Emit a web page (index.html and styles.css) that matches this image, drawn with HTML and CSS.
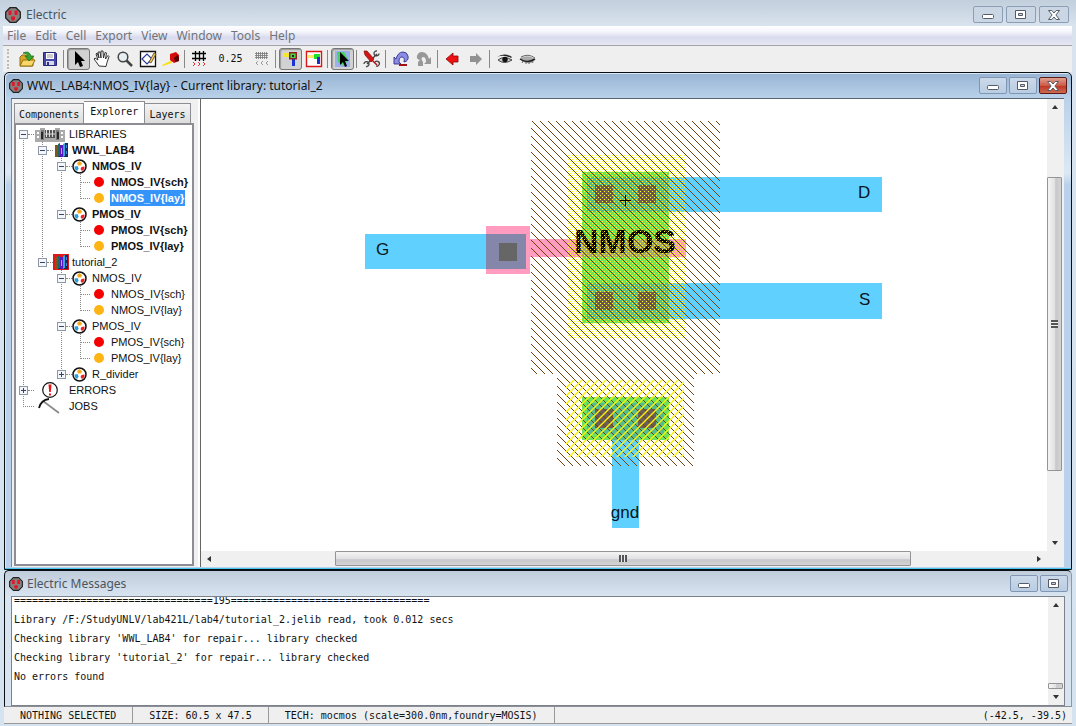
FILE: index.html
```html
<!DOCTYPE html>
<html lang="en">
<head>
<meta charset="utf-8">
<title>Electric</title>
<link rel="stylesheet" href="styles.css">
</head>
<body>
<svg class="defs" aria-hidden="true">
  <symbol id="logo" viewBox="0 0 16 16">
    <path d="M5 .7h6L15.3 5v6L11 15.3H5L.7 11V5z" fill="#85807c" stroke="#222" stroke-width="1.3"/>
    <path d="M3.500 3.500h3v4.500h-3zM9.500 3.500h3v4.500h-3zM6 9.500h4v2.500l-1 1.500H7l-1-1.500z" fill="#e3132c"/>
  </symbol>
  <symbol id="min" viewBox="0 0 12 10"><rect x=".5" y="4.500" width="11" height="4" rx="1" fill="#fff" stroke="#555a66"/></symbol>
  <symbol id="max" viewBox="0 0 12 10"><path fill-rule="evenodd" d="M.5.500h10v8H.500zM3.500 3.500h4v2h-4z" fill="#fff" stroke="#555a66"/></symbol>
  <symbol id="close" viewBox="0 0 12 10"><path d="M.5.500h3.300L6 3 8.200.500h3.300L7.900 5l3.600 4.500H8.200L6 7 3.800 9.500H.500L4.100 5z" fill="#fff" stroke="#555a66"/></symbol>
  <symbol id="cell" viewBox="0 0 15 15">
    <circle cx="7.500" cy="7.500" r="6.500" fill="#fff" stroke="#111" stroke-width="1.500"/>
    <path d="M7.500 2l2.500 2-1 2.500H6L5 4z" fill="#f3a81c"/><path d="M2.500 7.500L5.500 7l1.200 2.500L5 12 2.800 10z" fill="#2d9be0"/><path d="M9.500 8l3-.5V10L10 12 8.500 10z" fill="#e8222a"/>
  </symbol>
  <symbol id="books" viewBox="0 0 16 16">
    <path d="M2 3h12v12H2z" fill="#101820"/>
    <path d="M2 3h3v12H2z" fill="#80561c"/><path d="M5 2l2-1v13l-2 1z" fill="#1b6a60"/><path d="M7 3h3v12H7z" fill="#5a18c0"/><path d="M8 6h1v6H8z" fill="#5ac8f8"/><path d="M10 2l2-1v13l-2 1z" fill="#30a8d8"/><path d="M12 1h3v14h-3z" fill="#182860"/><path d="M13 3h1v3h-1zM13 9h1v3h-1z" fill="#4a80e0"/>
  </symbol>
  <symbol id="up" viewBox="0 0 8 8"><path d="M1 6l3-4 3 4z" fill="#333"/></symbol>
  <symbol id="down" viewBox="0 0 8 8"><path d="M1 2l3 4 3-4z" fill="#333"/></symbol>
  <symbol id="left" viewBox="0 0 8 8"><path d="M6 1L2 4l4 3z" fill="#333"/></symbol>
  <symbol id="right" viewBox="0 0 8 8"><path d="M2 1l4 3-4 3z" fill="#333"/></symbol>
</svg>

<div class="app">
  <header class="titlebar">
    <svg class="logo"><use href="#logo"/></svg>
    <h1>Electric</h1>
    <div class="controls wide">
      <button aria-label="Minimize"><svg><use href="#min"/></svg></button>
      <button aria-label="Maximize"><svg><use href="#max"/></svg></button>
      <button aria-label="Close"><svg><use href="#close"/></svg></button>
    </div>
  </header>

  <nav class="menu">
    <button>File</button><button>Edit</button><button>Cell</button><button>Export</button><button>View</button><button>Window</button><button>Tools</button><button>Help</button>
  </nav>

  <div class="toolbar">
    <span class="grip"></span>
    <button aria-label="Open library"><svg viewBox="0 0 18 18"><path d="M2 16V7l2-2h4l1 2h6v9z" fill="#d8a62c" stroke="#94700f"/><path d="M2 16l3-6h12l-3 6z" fill="#fbd76a" stroke="#94700f"/><path d="M5 3q6-3 8 3h3l-5 5-4-5h3q-1-3-5-3z" fill="#35a42f" stroke="#176e19" stroke-width=".7"/></svg></button>
    <button aria-label="Save library"><svg viewBox="0 0 18 18"><path d="M2.500 2.500h12l1 1v12h-13z" fill="#4747a8" stroke="#26267b"/><path d="M5 3h8v6H5z" fill="#fff"/><path d="M6 5h6M6 7h6" stroke="#999"/><path d="M5 11h8v4H5z" fill="#d8d8e8"/><path d="M6 12h2v3H6z" fill="#33338c"/></svg></button>
    <span class="sep"></span>
    <button class="on" aria-label="Select"><svg viewBox="0 0 18 18"><path d="M5 1v14l3-3 2 5 3-1-2-5h4z" fill="#000"/></svg></button>
    <button aria-label="Pan"><svg viewBox="0 0 18 18"><path d="M6 16l-2-3-3-4 1-1 3 2-2-6 1-1 2 5-1-6h2l1 6V1h2l.500 7L12 2.500l1.500.500-1 6L15 5.500l1 1-2 6-1 4z" fill="#fff" stroke="#222" stroke-width=".9"/></svg></button>
    <button aria-label="Zoom"><svg viewBox="0 0 18 18"><circle cx="7" cy="7" r="4.800" fill="#e6eef2" stroke="#444" stroke-width="1.500"/><path d="M10.500 10.500L16 16" stroke="#444" stroke-width="2.500"/></svg></button>
    <button aria-label="Outline"><svg viewBox="0 0 18 18"><path d="M1.500 1.500h15v15h-15z" fill="#fff" stroke="#111" stroke-width="1.300"/><path d="M3 9l5-5 5 5-5 5z" fill="none" stroke="#283a98" stroke-width="1.200"/><path d="M10 12l5-9 2 1-5 9z" fill="#f2c65a" stroke="#594315" stroke-width=".8"/></svg></button>
    <button aria-label="Measure"><svg viewBox="0 0 18 18"><path d="M0 15l10-5v3l-9 3z" fill="#f5e31a"/><path d="M8 4l6-2 3 3v6l-5 2-4-3z" fill="#d80b0b"/><path d="M12 8l3-3 2 2v4l-4 1z" fill="#590505"/></svg></button>
    <span class="sep"></span>
    <button aria-label="Grid alignment"><svg viewBox="0 0 18 18"><path d="M4.500 1v10M8.500 1v10M12.500 1v10M1 3.500h14M1 8.500h14" stroke="#000" stroke-width="1.300"/><path d="M2 12l2 2-2 2M7 12l2 2-2 2M12 12l2 2-2 2" fill="none" stroke="#e03030"/></svg></button>
    <output class="grid-size">0.25</output>
    <button aria-label="Finer grid"><svg viewBox="0 0 18 18"><path d="M3.500 2v7M5.500 2v7M7.500 2v7M9.500 2v7M11.500 2v7M13.500 2v7M2 3.500h13M2 5.500h13M2 7.500h13" stroke="#777" stroke-width=".8"/><path d="M5 11l-2 2 2 2M10 11l-2 2 2 2M15 11l-2 2 2 2" fill="none" stroke="#999"/></svg></button>
    <span class="sep"></span>
    <button class="on" aria-label="Select objects"><svg viewBox="0 0 18 18"><path d="M1 3h8v4H1z" fill="#f7e62a"/><path d="M10 8h3v8h-3z" fill="#1836d8"/><path d="M7.700 2.700h6.600v6H7.700z" fill="#44d844" stroke="#8f2020" stroke-width="1.400"/><path d="M10 5h2v2h-2z" fill="#222"/></svg></button>
    <button aria-label="Select area"><svg viewBox="0 0 18 18"><path d="M1.500 1.500h15v15h-15z" fill="#fff" stroke="#d81818" stroke-width="1.400"/><path d="M2 5h7v3H2z" fill="#f7f06a"/><path d="M9 4h6v5H9z" fill="#20e030"/><path d="M12 7h3v7h-3z" fill="#1830d0"/></svg></button>
    <span class="sep"></span>
    <button class="on" aria-label="Special select"><svg viewBox="0 0 18 18"><path d="M1 1h15v16H1z" fill="#9ab0ea"/><path d="M3 2h7l4 8-4 6-6-4z" fill="#43d35e"/><path d="M6 2v13l3-3 2 5 2-1-2-5h4z" fill="#000"/></svg></button>
    <span class="sep"></span>
    <button aria-label="Preferences"><svg viewBox="0 0 18 18"><path d="M4 14L14 4M16 3.500a2.500 2.500 0 1 1-2-2.500M1 14a2.500 2.500 0 1 1 2 2.500M12 12a2.500 2.500 0 1 1 1 4" fill="none" stroke="#444" stroke-width="1.300"/><path d="M1 1h3l7 8-3 3-6-7z" fill="#d51616" stroke="#7d0808" stroke-width=".7"/><path d="M9 10l5 5" stroke="#b41010" stroke-width="1.500"/></svg></button>
    <span class="sep"></span>
    <button aria-label="Undo"><svg viewBox="0 0 18 18"><path d="M2 7v7h7l-2-2q0-5 3-5 3 0 2 5 5-1 4-6-1-4-5-4-5 0-7 7z" fill="#8c8ce4" stroke="#30308f" stroke-width=".9"/><path d="M7 14h8v2H7z" fill="#a31212"/></svg></button>
    <button aria-label="Redo"><svg viewBox="0 0 18 18"><path d="M16 7v7H9l2-2q0-5-3-5-3 1 0 5v4H3v-4l2-2Q1 9 2 6q1-4 5-4 5 0 7 7z" fill="#989898"/></svg></button>
    <span class="sep"></span>
    <button aria-label="Back"><svg viewBox="0 0 18 18"><path d="M2 9l7-6v3h5v6H9v3z" fill="#ed1111" stroke="#8c0808" stroke-width=".8"/></svg></button>
    <button aria-label="Forward"><svg viewBox="0 0 18 18"><path d="M15 9L9 3v3H3v6h6v3z" fill="#919191"/></svg></button>
    <span class="sep"></span>
    <button aria-label="Expand cell"><svg viewBox="0 0 18 18"><path d="M1 7q7-5 15 0l-1 1Q8 4 1 7z" fill="#222"/><path d="M2 10q6-5 14 0-8 5-14 0z" fill="#ccc" stroke="#444"/><circle cx="9" cy="9.500" r="2.700" fill="#111"/></svg></button>
    <button aria-label="Unexpand cell"><svg viewBox="0 0 18 18"><path d="M1 8q8-4 15 1-1 5-8 4-6-1-7-5z" fill="#aaa"/><path d="M1 9q7 5 15 0" fill="none" stroke="#222" stroke-width="1.500"/><path d="M4 11l-1 2M7 12v2M10 12v2M13 11l1 2M2 7q7-4 14 1" fill="none" stroke="#666"/></svg></button>
  </div>

  <main class="window doc">
    <header class="wintitle">
      <svg class="logo"><use href="#logo"/></svg>
      <h2>WWL_LAB4:NMOS_IV{lay} - Current library: tutorial_2</h2>
      <div class="controls">
        <button aria-label="Minimize"><svg><use href="#min"/></svg></button>
        <button aria-label="Maximize"><svg><use href="#max"/></svg></button>
        <button class="danger" aria-label="Close"><svg><use href="#close"/></svg></button>
      </div>
    </header>
    <div class="docbody">
      <aside class="side">
        <div class="tabs" role="tablist">
          <button role="tab">Components</button><button role="tab" class="active" aria-selected="true">Explorer</button><button role="tab">Layers</button>
        </div>
        <div class="treebox">
          <ul class="tree">
            <li>
              <div class="row root"><button class="toggle" aria-label="Collapse"></button><i></i>
                <svg viewBox="0 0 32 16"><path d="M1 4h5V2h5v2h10V2h5v2h5v12H1z" fill="#aaa"/><path d="M7 4h3v10H7zM22 4h3v10h-3z" fill="#777"/><path d="M11 4h10v8H11z" fill="#555"/><path d="M12.500 4v7M15.500 4v7M18.500 4v7M11 8h10" stroke="#ddd"/><path d="M3 6h2v2H3zM3 10h2v2H3zM27 6h2v2h-2zM27 10h2v2h-2z" fill="#fff"/><path d="M8 6v7M24 6v7" stroke="#111" stroke-width="1.500"/></svg>
                <span>LIBRARIES</span></div>
              <ul>
                <li>
                  <div class="row lib bold"><button class="toggle" aria-label="Collapse"></button><i></i><svg><use href="#books"/></svg><span>WWL_LAB4</span></div>
                  <ul>
                    <li>
                      <div class="row cell bold"><button class="toggle" aria-label="Collapse"></button><i></i><svg><use href="#cell"/></svg><span>NMOS_IV</span></div>
                      <ul>
                        <li><div class="row leaf bold"><i></i><b class="dot red"></b><span>NMOS_IV{sch}</span></div></li>
                        <li><div class="row leaf bold"><i></i><b class="dot"></b><span class="selected">NMOS_IV{lay}</span></div></li>
                      </ul>
                    </li>
                    <li>
                      <div class="row cell bold"><button class="toggle" aria-label="Collapse"></button><i></i><svg><use href="#cell"/></svg><span>PMOS_IV</span></div>
                      <ul>
                        <li><div class="row leaf bold"><i></i><b class="dot red"></b><span>PMOS_IV{sch}</span></div></li>
                        <li><div class="row leaf bold"><i></i><b class="dot"></b><span>PMOS_IV{lay}</span></div></li>
                      </ul>
                    </li>
                  </ul>
                </li>
                <li>
                  <div class="row lib current"><button class="toggle" aria-label="Collapse"></button><i></i><svg><use href="#books"/></svg><span>tutorial_2</span></div>
                  <ul>
                    <li>
                      <div class="row cell"><button class="toggle" aria-label="Collapse"></button><i></i><svg><use href="#cell"/></svg><span>NMOS_IV</span></div>
                      <ul>
                        <li><div class="row leaf"><i></i><b class="dot red"></b><span>NMOS_IV{sch}</span></div></li>
                        <li><div class="row leaf"><i></i><b class="dot"></b><span>NMOS_IV{lay}</span></div></li>
                      </ul>
                    </li>
                    <li>
                      <div class="row cell"><button class="toggle" aria-label="Collapse"></button><i></i><svg><use href="#cell"/></svg><span>PMOS_IV</span></div>
                      <ul>
                        <li><div class="row leaf"><i></i><b class="dot red"></b><span>PMOS_IV{sch}</span></div></li>
                        <li><div class="row leaf"><i></i><b class="dot"></b><span>PMOS_IV{lay}</span></div></li>
                      </ul>
                    </li>
                    <li><div class="row cell"><button class="toggle plus" aria-label="Expand"></button><i></i><svg><use href="#cell"/></svg><span>R_divider</span></div></li>
                  </ul>
                </li>
              </ul>
            </li>
            <li><div class="row root"><button class="toggle plus" aria-label="Expand"></button><i></i>
              <svg viewBox="0 0 32 16"><circle cx="16" cy="8" r="7.300" fill="#fff" stroke="#111" stroke-width="1.200"/><path d="M14.500 2.500h3L16.800 10h-1.600zM15 11.500h2v2h-2z" fill="#ee1111"/></svg>
              <span>ERRORS</span></div></li>
            <li><div class="row root"><i class="long"></i>
              <svg viewBox="0 0 32 16"><path d="M9 3l16 12" stroke="#888" stroke-width="1.600"/><path d="M5 10Q7 2 15 1" fill="none" stroke="#111" stroke-width="1.800"/></svg>
              <span>JOBS</span></div></li>
          </ul>
        </div>
      </aside>

      <section class="view">
        <svg class="layout" viewBox="201 99 846 452" preserveAspectRatio="xMidYMid meet" role="img" aria-label="NMOS layout">
          <defs>
            <pattern id="well" width="8" height="8" patternUnits="userSpaceOnUse" x="531" y="121">
              <path d="M-1 -2L10 9M-1 6L3 10" stroke="#6e4208" stroke-width="1"/>
            </pattern>
            <pattern id="pselect" width="8" height="8" patternUnits="userSpaceOnUse" x="566" y="380">
              <path d="M-1 9L9 -1M-1 1L1 -1M7 9L9 7" stroke="#fff000" stroke-width="1.400"/>
            </pattern>
            <pattern id="nselect" width="4" height="4" patternUnits="userSpaceOnUse" x="568" y="155">
              <path d="M0 0h1v1H0zM2 2h1v1H2z" fill="#ffff20"/>
            </pattern>
          </defs>
          <g shape-rendering="crispEdges">
            <g fill="#60d0ff"><path d="M365 234h121v35H365zM669 177h213v35H669zM669 283h213v36H669zM612 440h27v88h-27z"/></g>
            <path d="M486 226h44v13h156v18H530v17h-44z" fill="#ff9cc0"/>
            <path d="M486 234h40v35h-40z" fill="#8487aa"/>
            <path d="M499 243h18v18h-18z" fill="#666"/>
            <path d="M582 172h87v151h-87zM582 397h87v43h-87z" fill="#6be260"/>
            <path d="M582 239h87v18h-87z" fill="#a0a678"/>
            <path d="M587 177h82v35h-82zM587 283h82v36h-82zM587 403h77v31h-25v6h-27v-6h-25z" fill="#55bc90"/>
            <path d="M595 185h18v18h-18zM638 185h18v18h-18zM595 292h18v18h-18zM638 292h18v18h-18zM595 409h18v19h-18zM638 409h18v19h-18z" fill="#6b5d58"/>
          </g>
          <text class="device" x="625" y="253" text-anchor="middle">NMOS</text>
          <path d="M568 155h118v183H568z" fill="url(#nselect)"/>
          <path d="M531 121h189v253h-26v92H557v-92h-26z" fill="url(#well)"/>
          <path d="M566 380h118v77H566z" fill="url(#pselect)"/>
          <path d="M620 200h11v1h-11zM625 195h1v11h-1z" fill="#000"/>
          <g class="port">
            <text x="376" y="255">G</text><text x="858" y="198">D</text><text x="859" y="305">S</text><text x="625" y="518" text-anchor="middle">gnd</text>
          </g>
        </svg>
        <div class="vbar">
          <button aria-label="Scroll up"><svg><use href="#up"/></svg></button><span class="gap-a"></span><span class="thumb"><b></b></span><span class="gap-b"></span><button aria-label="Scroll down"><svg><use href="#down"/></svg></button>
        </div>
        <div class="hbar">
          <button aria-label="Scroll left"><svg><use href="#left"/></svg></button><span class="gap-a"></span><span class="thumb"><b></b></span><span class="gap-b"></span><button aria-label="Scroll right"><svg><use href="#right"/></svg></button>
        </div>
      </section>
    </div>
  </main>

  <section class="window messages">
    <header class="wintitle">
      <svg class="logo"><use href="#logo"/></svg>
      <h2>Electric Messages</h2>
      <div class="controls">
        <button aria-label="Minimize"><svg><use href="#min"/></svg></button>
        <button aria-label="Maximize"><svg><use href="#max"/></svg></button>
      </div>
    </header>
    <div class="msgbody">
      <div class="log">
        <p>=================================195=================================</p>
        <p>Library /F:/StudyUNLV/lab421L/lab4/tutorial_2.jelib read, took 0.012 secs</p>
        <p>Checking library 'WWL_LAB4' for repair... library checked</p>
        <p>Checking library 'tutorial_2' for repair... library checked</p>
        <p>No errors found</p>
      </div>
      <div class="vbar end">
        <button aria-label="Scroll up"><svg><use href="#up"/></svg></button><span class="gap-a"></span><span class="thumb"></span><button aria-label="Scroll down"><svg><use href="#down"/></svg></button>
      </div>
    </div>
  </section>

  <footer class="status">
    <span>NOTHING SELECTED</span><span>SIZE: 60.5 x 47.5</span><span>TECH: mocmos (scale=300.0nm,foundry=MOSIS)</span><span class="coords">(-42.5, -39.5)</span>
  </footer>
</div>
</body>
</html>
```
FILE: styles.css
```css
* { box-sizing: border-box; }

body {
  margin: 0;
  font-family: "Noto Sans", "Open Sans", sans-serif;
  font-size: 12px;
  color: #111;
}

button {
  margin: 0;
  padding: 0;
  border: 0;
  background: none;
  font: inherit;
  color: inherit;
}

h1, h2, p, ul { margin: 0; padding: 0; }
h1, h2 { font-size: 12px; font-weight: 400; line-height: 18px; }
ul { list-style: none; }
.defs { display: none; }

.app {
  height: 100vh;
  display: flex;
  flex-direction: column;
  padding: 0 4px 2px 3px;
  background: linear-gradient(#c2cfdc, #d8e3ee 26px, #d5e3f0);
}

/* Title bars */
.titlebar {
  display: flex;
  align-items: center;
  gap: 5px;
  height: 26px;
  padding: 3px 3px 0 2px;
  color: #4a5560;
}
.logo { width: 16px; height: 16px; }
.controls { display: flex; gap: 2px; margin-left: auto; }
.controls button {
  display: grid;
  place-items: center;
  width: 28px;
  height: 17px;
  border: 1px solid #7f96b4;
  border-radius: 2px;
  background: linear-gradient(#cbdaea, #b9cce1);
}
.controls svg { width: 12px; height: 10px; }
.controls.wide { gap: 3px; }
.controls.wide button { width: 30px; background: #cad6e3; border-color: #8b9eb5; }
.controls .danger {
  border-color: #5c1a17;
  background: linear-gradient(#e0a090, #cc5a46 50%, #bb3423 51%, #d06a50);
}

/* Menu and toolbar */
.menu {
  display: flex;
  gap: 9px;
  height: 20px;
  padding-left: 4px;
  border-bottom: 1px solid #a3a3a8;
  background: linear-gradient(#fff, #f4f5fb 30%, #d9dbee 60%, #e6e7f4);
  color: #70747a;
}
.toolbar {
  display: flex;
  align-items: center;
  height: 26px;
  padding-left: 4px;
  background: #efefef;
}
.toolbar button {
  display: grid;
  place-items: center;
  flex: none;
  width: 23px;
  height: 22px;
}
.toolbar button svg { width: 18px; height: 18px; }
.toolbar .on {
  border: 1px solid #777;
  border-radius: 3px;
  background: #d2d2d2;
  box-shadow: inset 1px 1px 1px #999;
}
.grip { width: 2px; height: 20px; margin-right: 6px; border-left: 2px dotted #bbb; }
.sep { width: 1px; height: 18px; margin: 0 3px 0 2px; background: #888; }
.grid-size {
  width: 39px;
  text-align: center;
  font: 10px/18px "DejaVu Sans Mono", monospace;
}

/* Inner windows */
.window {
  display: flex;
  flex-direction: column;
  min-height: 0;
  margin-left: 1px;
  border: 1px solid #0a0f14;
  border-radius: 5px 5px 0 0;
}
.wintitle {
  display: flex;
  align-items: center;
  gap: 4px;
  flex: none;
  height: 25px;
  padding: 1px 3px 0 4px;
}
.wintitle .logo { width: 14px; height: 14px; }
.doc {
  flex: 1;
  padding: 0 7px 2px 6px;
  background: linear-gradient(#98b4d3, #b9d1ea 25px, #dce8f4 100px, #b9d1ea 112px);
  box-shadow: inset 0 -1px #48c8f0, inset 1px 1px #d8e8f6;
}
.doc .wintitle { margin: 0 -7px 0 -6px; padding: 0 4px; }
.docbody {
  display: flex;
  flex: 1;
  min-height: 0;
  border-top: 1px solid #5a6470;
  background: #f0f0f0;
}

/* Explorer */
.side {
  display: flex;
  flex-direction: column;
  flex: none;
  width: 189px;
  padding: 1px 4px 1px 2px;
  border-left: 1px solid #7d8a9a;
  border-right: 2px solid #fdfdfd;
}
.tabs {
  display: flex;
  align-items: flex-end;
  height: 23px;
  font: 10px/16px "DejaVu Sans Mono", monospace;
}
.tabs button {
  height: 20px;
  padding: 2px 4px 0;
  border: 1px solid #8c8e94;
  border-bottom: 0;
  background: linear-gradient(#f3f3f3, #ddd);
}
.tabs button + button { border-left: 0; }
.tabs .active { height: 22px; padding: 0 6px 1px; background: #fff; }
.treebox {
  flex: 1;
  min-height: 0;
  overflow: hidden;
  padding: 1px 0 0 3px;
  border: 2px solid #8c8e94;
  background: #fff;
}
.tree { font: 11px/16px "Liberation Sans", Arial, sans-serif; }
.tree ul { margin-left: 19px; }
.tree li {
  background: repeating-linear-gradient(#888 0 1px, transparent 1px 2px) 4px 0 / 1px 100% no-repeat;
}
.tree li:last-child { background-size: 1px 8px; }
.tree > li:first-child { background-position: 4px 8px; }
.row { display: flex; align-items: center; height: 16px; white-space: nowrap; }
.row i { flex: none; width: 6px; border-top: 1px dotted #888; }
.row i.long { width: 11px; margin-left: 4px; }
.row svg { flex: none; width: 16px; height: 16px; margin-right: 2px; }
.root svg { width: 32px; }
.cell svg { width: 15px; height: 15px; margin-right: 4px; }
.current svg { background: #e01818; }
.leaf i { width: 10px; margin-left: 4px; }
.bold { font-weight: 700; }
.dot {
  width: 10px;
  height: 10px;
  margin: 0 6px 0 4px;
  border-radius: 5px;
  background: #fdb414;
}
.dot.red { background: #f50000; }
.row span { padding: 0 1px; }
.selected { background: #3494fa; color: #fff; }
.toggle {
  flex: none;
  width: 9px;
  height: 9px;
  border: 1px solid #8d97a8;
  background: linear-gradient(#34436a, #34436a) center / 5px 1px no-repeat, #f4f6f9;
}
.toggle.plus {
  background: linear-gradient(#34436a, #34436a) center / 5px 1px no-repeat, linear-gradient(#34436a, #34436a) center / 1px 5px no-repeat, #f4f6f9;
}

/* Layout view */
.view {
  display: grid;
  flex: 1;
  min-width: 0;
  grid-template: minmax(0, 1fr) 16px / minmax(0, 1fr) 17px;
  border-left: 1px solid #666;
}
.layout { width: 100%; height: 100%; background: #fff; }
.device { font: 700 34px "Liberation Sans", Arial, sans-serif; }
.port { font: 17px "Liberation Sans", Arial, sans-serif; fill: #0a1520; }

.vbar, .hbar { display: flex; background: #f0f0f0; }
.vbar { flex-direction: column; }
.vbar button, .hbar button { display: grid; place-items: center; flex: none; width: 16px; height: 16px; }
.vbar button svg, .hbar button svg { width: 8px; height: 8px; }
.thumb {
  display: grid;
  place-items: center;
  border: 1px solid #949494;
  border-radius: 1px;
}
.vbar .thumb { flex: 294; margin-right: 2px; background: linear-gradient(90deg, #f4f4f4, #e2e2e4 50%, #c8c8cc 60%, #d4d4d6); }
.hbar .thumb { flex: 576; margin-bottom: 1px; background: linear-gradient(#f4f4f4, #e2e2e4 50%, #c8c8cc 60%, #d4d4d6); }
.vbar .thumb b { width: 7px; height: 8px; background: repeating-linear-gradient(#555 0 2px, #eee 2px 3px); }
.hbar .thumb b { width: 8px; height: 7px; background: repeating-linear-gradient(90deg, #555 0 2px, #eee 2px 3px); }
.vbar .gap-a { flex: 62; }
.vbar .gap-b { flex: 64; }
.hbar .gap-a { flex: 118; }
.hbar .gap-b { flex: 120; }

/* Messages */
.messages {
  flex: none;
  height: 137px;
  padding: 0 6px;
  border-right-color: #8c98a4;
  border-bottom-color: #8c9096;
  background: linear-gradient(#c0ccda, #d8e4f0 25px);
}
.messages .wintitle { margin: 0 -6px; padding: 0 3px 0 4px; color: #4a5560; }
.msgbody {
  display: flex;
  flex: 1;
  min-height: 0;
  overflow: hidden;
  border: 1px solid #7b828c;
  background: #fff;
}
.log {
  flex: 1;
  margin-top: -6px;
  padding-left: 2px;
  font: 10px/19px "DejaVu Sans Mono", monospace;
}
.end .gap-a { flex: 1; }
.vbar.end .thumb { flex: none; height: 6px; margin-right: 1px; }

/* Status bar */
.status {
  display: flex;
  flex: none;
  height: 17px;
  margin-left: 1px;
  border-bottom: 1px solid #999;
  background: #efefef;
  font: 10px/18px "DejaVu Sans Mono", monospace;
}
.status span { padding: 0 16px; border-right: 1px solid #999; }
.status .coords { margin-left: auto; padding: 0 5px; border: 0; }
```
